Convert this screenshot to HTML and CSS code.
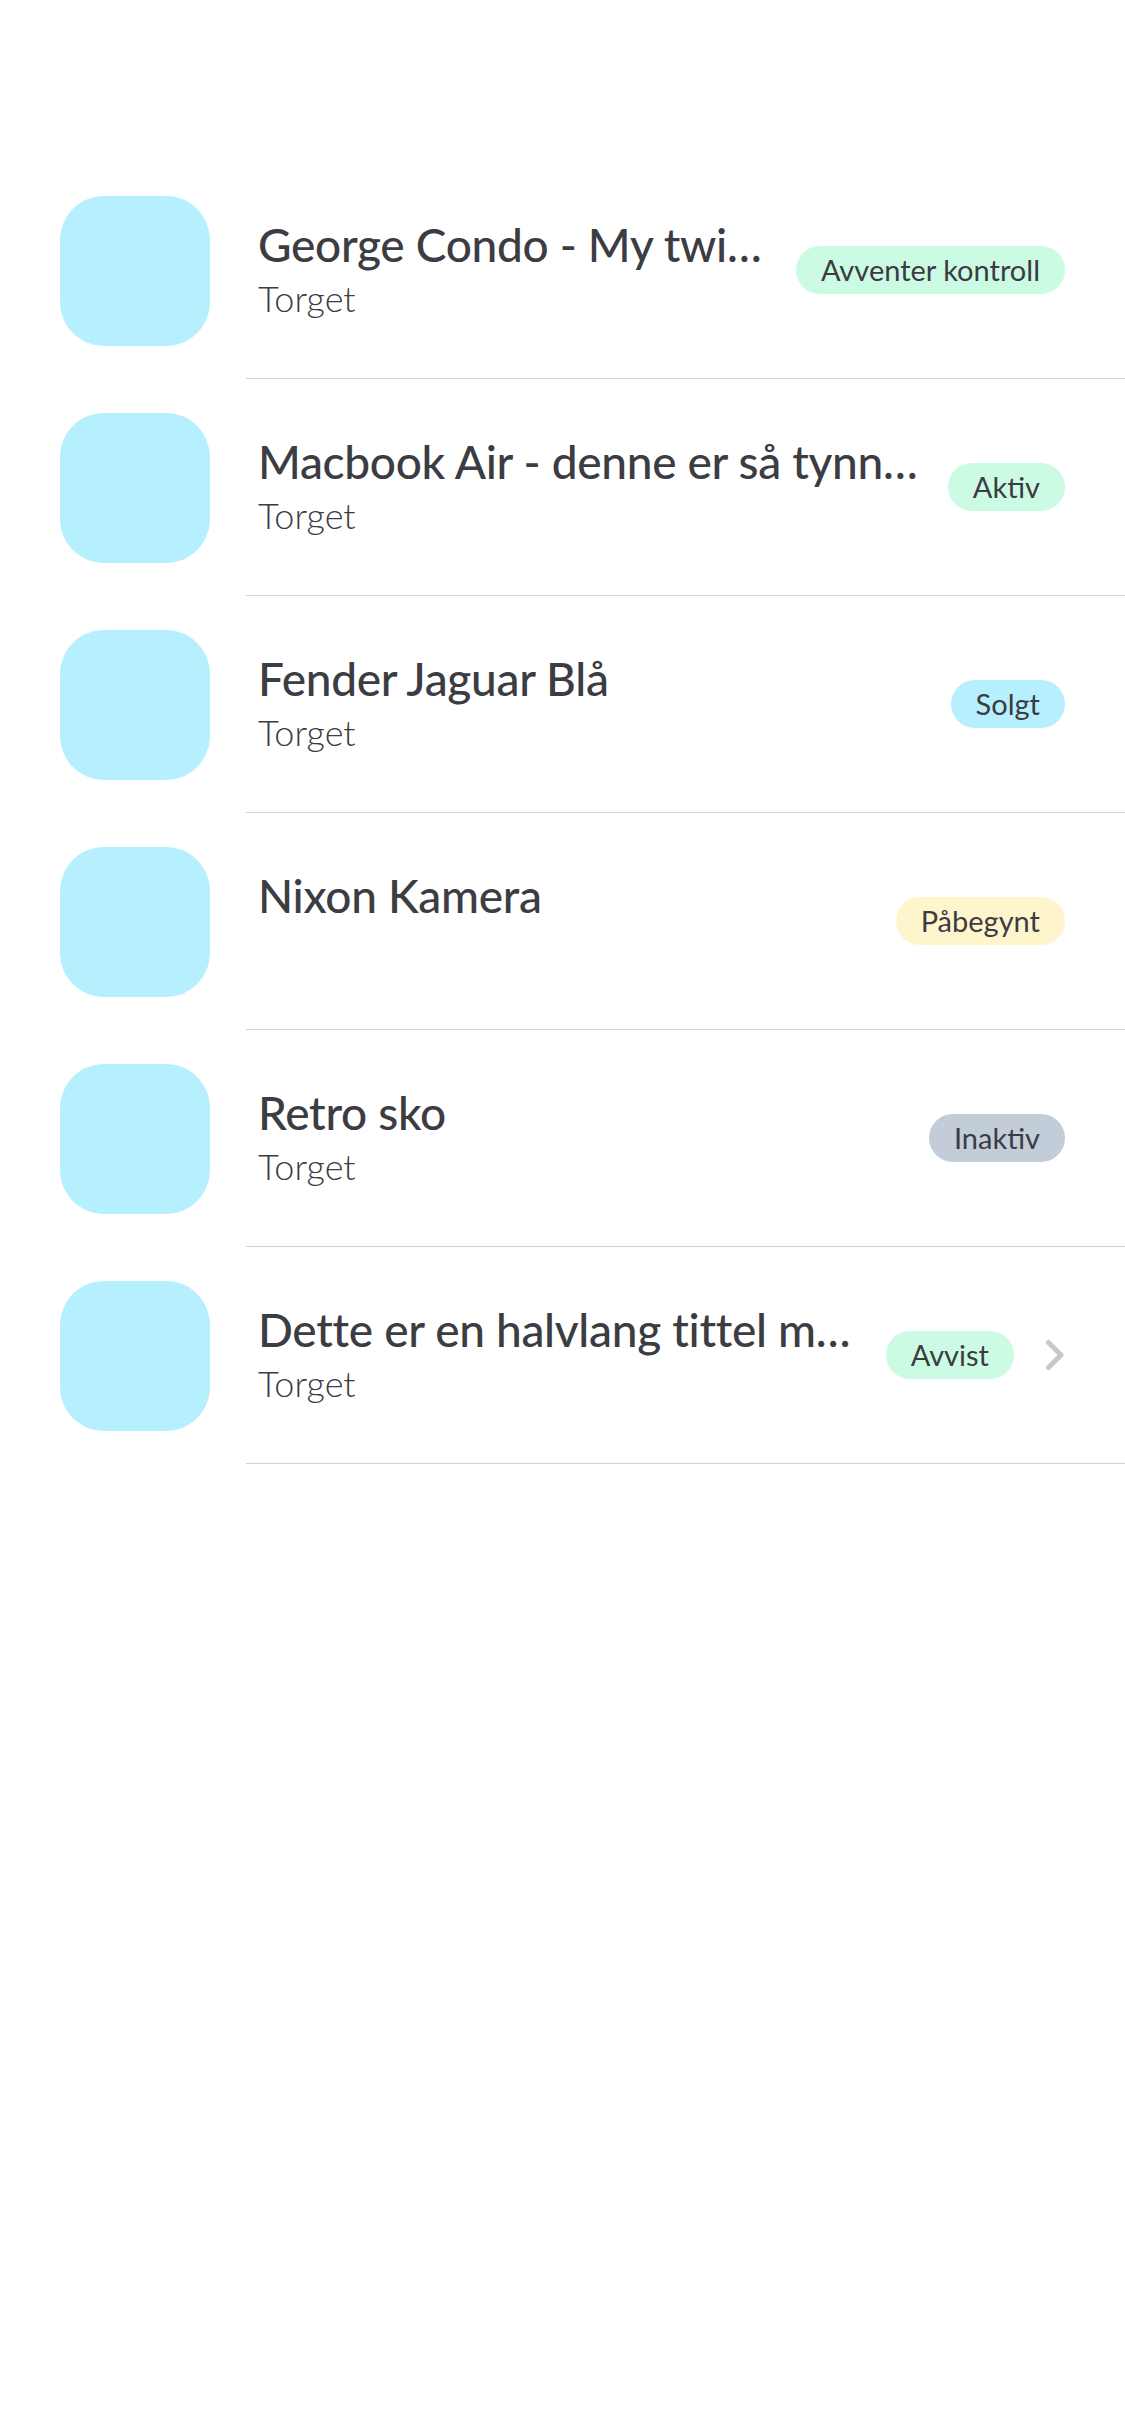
FILE: index.html
```html
<!DOCTYPE html>
<html lang="no">
<head>
<meta charset="utf-8">
<title>Annonser</title>
<link rel="stylesheet" href="styles.css">
</head>
<body>
<ul class="list">
  <li class="row">
    <div class="thumb"></div>
    <div class="content">
      <div class="text">
        <div class="title">George Condo - My twi…</div>
        <div class="sub">Torget</div>
      </div>
      <span class="badge badge-green">Avventer kontroll</span>
    </div>
  </li>
  <li class="row">
    <div class="thumb"></div>
    <div class="content">
      <div class="text">
        <div class="title">Macbook Air - denne er så tynn…</div>
        <div class="sub">Torget</div>
      </div>
      <span class="badge badge-green">Aktiv</span>
    </div>
  </li>
  <li class="row">
    <div class="thumb"></div>
    <div class="content">
      <div class="text">
        <div class="title">Fender Jaguar Blå</div>
        <div class="sub">Torget</div>
      </div>
      <span class="badge badge-blue">Solgt</span>
    </div>
  </li>
  <li class="row">
    <div class="thumb"></div>
    <div class="content">
      <div class="text">
        <div class="title">Nixon Kamera</div>
        <div class="sub">&nbsp;</div>
      </div>
      <span class="badge badge-yellow">Påbegynt</span>
    </div>
  </li>
  <li class="row">
    <div class="thumb"></div>
    <div class="content">
      <div class="text">
        <div class="title">Retro sko</div>
        <div class="sub">Torget</div>
      </div>
      <span class="badge badge-gray">Inaktiv</span>
    </div>
  </li>
  <li class="row">
    <div class="thumb"></div>
    <div class="content">
      <div class="text">
        <div class="title">Dette er en halvlang tittel m…</div>
        <div class="sub">Torget</div>
      </div>
      <span class="badge badge-green">Avvist</span>
      <svg class="chevron" width="20" height="32" viewBox="0 0 20 32" aria-hidden="true">
        <path d="M3.5 3.5 L16 16 L3.5 28.5" fill="none" stroke="#c7c7cc" stroke-width="5" stroke-linecap="round" stroke-linejoin="round"/>
      </svg>
    </div>
  </li>
</ul>
</body>
</html>
```

FILE: styles.css
```css
html, body {
  margin: 0;
  padding: 0;
  background: #ffffff;
}

body {
  font-family: Lato, "Noto Sans", "Liberation Sans", sans-serif;
  color: #3c3c43;
}

.list {
  list-style: none;
  margin: 0;
  padding: 162px 0 0 0;
}

.row {
  display: flex;
  align-items: stretch;
  padding-left: 60px;
}

.thumb {
  flex: 0 0 150px;
  width: 150px;
  height: 150px;
  align-self: center;
  border-radius: 44px;
  background: #b6effd;
  margin-right: 36px;
}

.content {
  flex: 1;
  min-width: 0;
  display: flex;
  align-items: center;
  height: 216px;
  padding: 0 60px 0 12px;
  border-bottom: 1.5px solid #d0d0d3;
}

.text {
  flex: 1;
  min-width: 0;
  display: flex;
  flex-direction: column;
  margin-right: 30px;
}

.title {
  font-size: 46px;
  font-weight: 500;
  line-height: 56px;
  letter-spacing: -0.3px;
  white-space: nowrap;
  color: #3c3c43;
}

.sub {
  font-size: 36px;
  font-weight: 300;
  line-height: 50px;
  white-space: nowrap;
  color: #3c3c43;
}

.badge {
  flex: 0 0 auto;
  height: 48px;
  line-height: 48px;
  padding: 0 25px;
  border-radius: 24px;
  font-size: 29px;
  font-weight: 400;
  color: #3c3c43;
  white-space: nowrap;
}

.badge-green { background: #ccfbe4; }
.badge-blue { background: #b6effd; }
.badge-yellow { background: #fff5cc; }
.badge-gray { background: #c3cdd9; }

.chevron {
  flex: 0 0 20px;
  margin-left: 31px;
}
```
